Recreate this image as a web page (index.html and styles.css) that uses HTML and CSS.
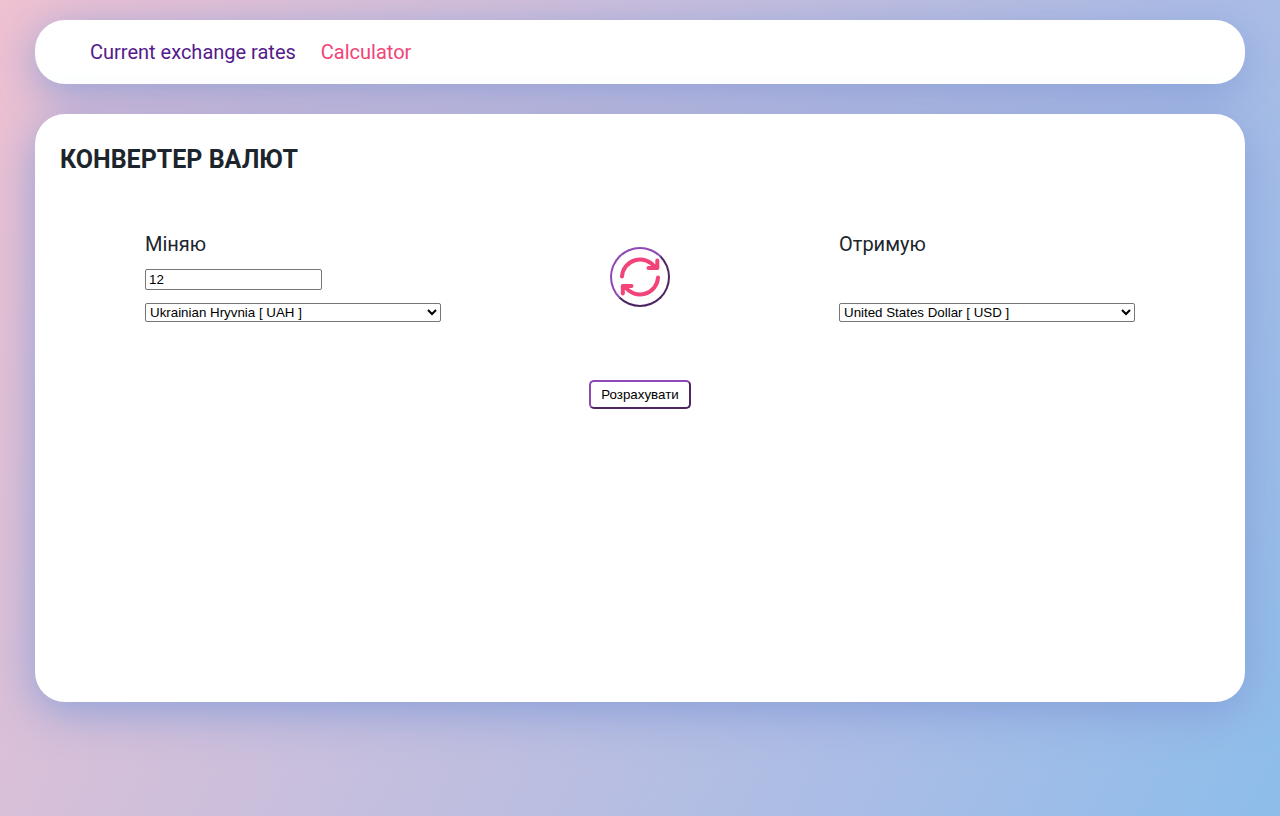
FILE: index.html
```html
<!DOCTYPE html>
<html lang="uk">
<head>
<meta charset="utf-8">
<meta name="viewport" content="width=device-width, initial-scale=1">
<title>Конвертер валют</title>
<link rel="stylesheet" href="styles.css">
</head>
<body>
<header class="panel header">
  <nav class="nav">
    <a class="nav-link" href="#rates">Current exchange rates</a>
    <a class="nav-link nav-link-active" href="#calculator" aria-current="page">Calculator</a>
  </nav>
</header>
<main class="panel main">
  <h1 class="title">КОНВЕРТЕР ВАЛЮТ</h1>
  <form class="converter">
    <div class="exchange">
      <div class="side">
        <label class="side-label" for="amount">Міняю</label>
        <input class="amount" id="amount" type="text" value="12">
        <select class="currency" aria-label="Міняю валюту">
          <option>Ukrainian Hryvnia [ UAH ]</option>
        </select>
      </div>
      <button class="swap" type="button" aria-label="Поміняти валюти">
        <svg class="swap-icon" viewBox="0 0 40 40" aria-hidden="true">
          <path d="M2 19.500A18 17.700 0 0 1 35 10.500M28.500 11H37.300V3.500M38 20.500A18 17.700 0 0 1 5 29.500M11.500 29H2.800V36.500"/>
        </svg>
      </button>
      <div class="side">
        <label class="side-label" for="target">Отримую</label>
        <output class="result"></output>
        <select class="currency" id="target">
          <option>United States Dollar [ USD ]</option>
        </select>
      </div>
    </div>
    <button class="submit" type="button">Розрахувати</button>
  </form>
</main>
</body>
</html>
```
FILE: styles.css
```css
* {
  box-sizing: border-box;
}

body {
  margin: 0;
  min-height: 100vh;
  padding: 20px 35px;
  font: 20px/24px Roboto, sans-serif;
  color: #1c252c;
  background: linear-gradient(118deg, #f0c1d1 0%, #a9bde6 75%, #8dbdeb 100%) fixed;
}

.panel {
  background: #fff;
  border-radius: 30px;
  box-shadow: 0 10px 45px rgba(130, 155, 215, 0.85);
}

.header {
  margin-bottom: 30px;
  padding: 20px 55px;
}

.nav {
  display: flex;
  gap: 25px;
}

.nav-link {
  color: #551a8b;
  text-decoration: none;
}

.nav-link-active {
  color: #f24478;
}

.main {
  min-height: 72vh;
  padding: 30px 25px;
}

.title {
  margin: 0;
  font-size: 25px;
  line-height: 32px;
  font-weight: 700;
}

.converter {
  display: flex;
  flex-direction: column;
  align-items: center;
  gap: 58px;
  padding: 56px 85px 0;
}

.exchange {
  display: flex;
  justify-content: space-between;
  width: 100%;
}

.side {
  display: flex;
  flex-direction: column;
  align-items: flex-start;
  width: 296px;
}

.side-label {
  margin-bottom: 13px;
}

.amount,
.result {
  width: 177px;
  height: 21px;
  margin-bottom: 13px;
}

.amount,
.currency {
  font-family: "Liberation Sans", Arial, sans-serif;
  color: #000;
  background: #fff;
  border: 1px solid #767676;
  border-radius: 2px;
}

.amount {
  padding: 1px 3px;
}

.currency {
  width: 100%;
  height: 19px;
}

.swap {
  display: grid;
  place-items: center;
  width: 60px;
  height: 60px;
  margin-top: 15px;
  padding: 0;
  background: #fff;
  border: 2px outset #8f48b6;
  border-radius: 50%;
}

.swap-icon {
  width: 40px;
  height: 40px;
  fill: none;
  stroke: #f24478;
  stroke-width: 4;
  stroke-linecap: round;
  stroke-linejoin: round;
}

.submit {
  padding: 5px 10px;
  font-family: "Liberation Sans", Arial, sans-serif;
  line-height: 15px;
  color: #000;
  background: #fff;
  border: 2px outset #8f48b6;
  border-radius: 5px;
}
```
